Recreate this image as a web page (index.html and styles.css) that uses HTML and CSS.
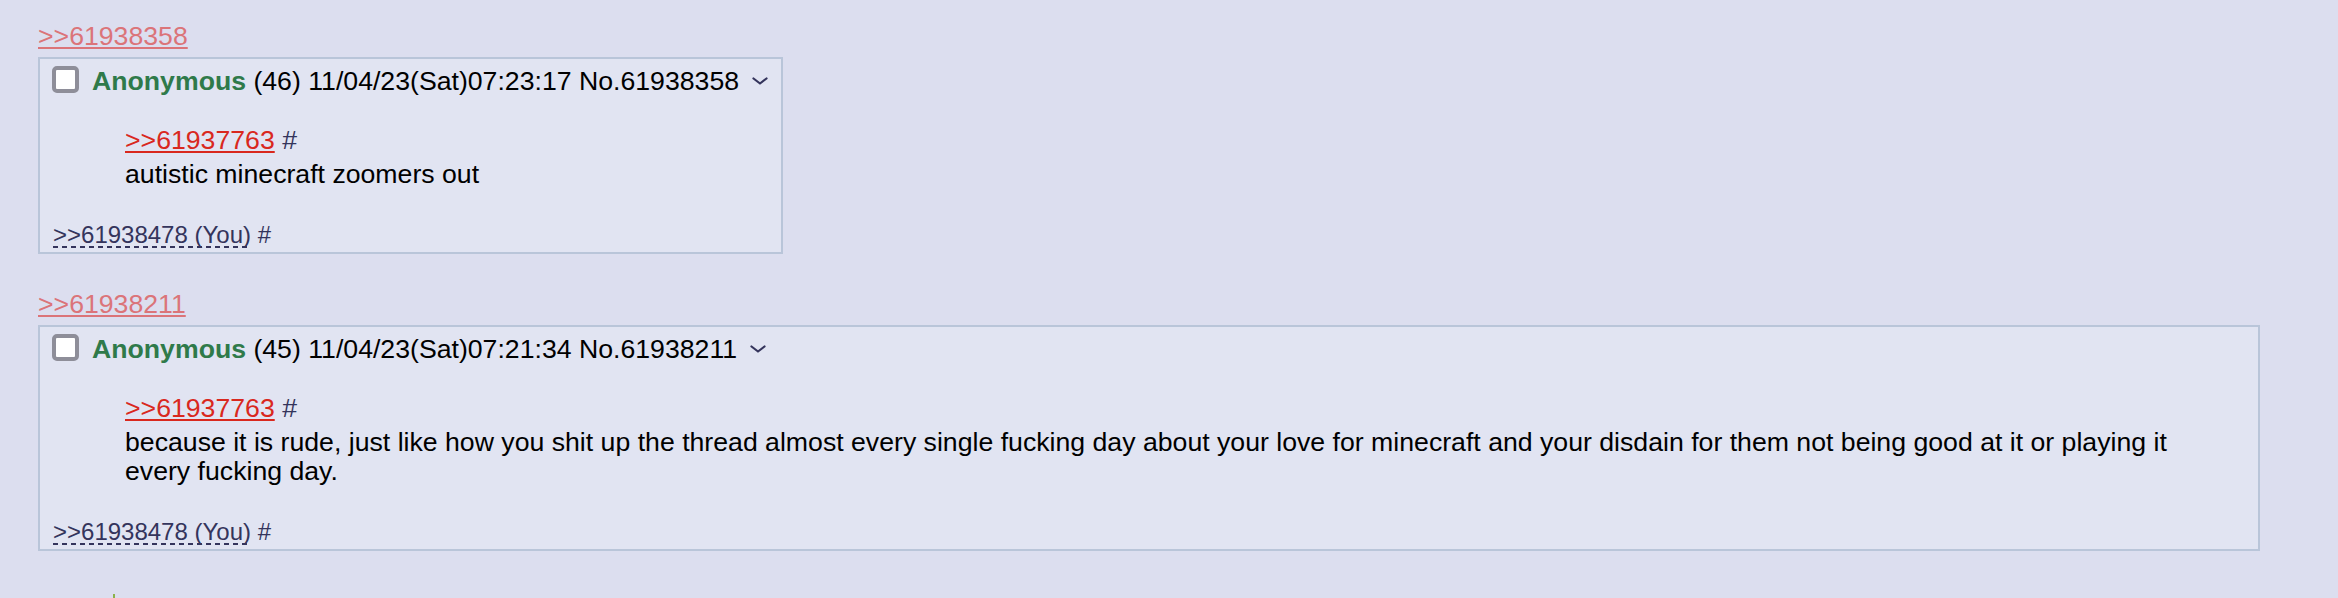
FILE: index.html
```html
<!DOCTYPE html>
<html>
<head>
<meta charset="utf-8">
<title>Thread</title>
<link rel="stylesheet" href="styles.css">
</head>
<body>
<div class="thread">
  <div class="group">
    <a class="ref" href="#p61938358">&gt;&gt;61938358</a>
    <div class="post">
      <div class="post-info">
        <input type="checkbox" class="check">
        <span class="meta"><span class="name">Anonymous</span> (46) 11/04/23(Sat)07:23:17 No.61938358</span>
        <svg class="menu" width="16" height="8" viewBox="0 0 16 8"><polyline points="1.5,1.5 8,6.5 14.5,1.5"/></svg>
      </div>
      <blockquote class="body">
        <span class="qline"><a class="quotelink" href="#p61937763">&gt;&gt;61937763</a> <a class="hash" href="#p61937763">#</a></span>
        autistic minecraft zoomers out
      </blockquote>
      <div class="backlinks"><a class="backlink" href="#p61938478">&gt;&gt;61938478 (You)</a> <a class="hash" href="#p61938478">#</a></div>
    </div>
  </div>
  <div class="group">
    <a class="ref" href="#p61938211">&gt;&gt;61938211</a>
    <div class="post">
      <div class="post-info">
        <input type="checkbox" class="check">
        <span class="meta"><span class="name">Anonymous</span> (45) 11/04/23(Sat)07:21:34 No.61938211</span>
        <svg class="menu" width="16" height="8" viewBox="0 0 16 8"><polyline points="1.5,1.5 8,6.5 14.5,1.5"/></svg>
      </div>
      <blockquote class="body">
        <span class="qline"><a class="quotelink" href="#p61937763">&gt;&gt;61937763</a> <a class="hash" href="#p61937763">#</a></span>
        because it is rude, just like how you shit up the thread almost every single fucking day about your love for minecraft and your disdain for them not being good at it or playing it every fucking day.
      </blockquote>
      <div class="backlinks"><a class="backlink" href="#p61938478">&gt;&gt;61938478 (You)</a> <a class="hash" href="#p61938478">#</a></div>
    </div>
  </div>
  <div class="next"><span class="mark"></span></div>
</div>
</body>
</html>
```
FILE: styles.css
```css
html, body {
  margin: 0;
  background: #dcdeef;
}
body {
  font-family: "Liberation Sans", Arial, Helvetica, sans-serif;
  font-size: 26.67px;
  color: #000;
}
.thread {
  padding: 21px 0 0 38px;
}
.group {
  margin-bottom: 35px;
}
.ref {
  display: block;
  width: fit-content;
  height: 31px;
  line-height: 31px;
  margin-bottom: 5px;
  color: #db7479;
  text-decoration: underline;
}
.post {
  box-sizing: border-box;
  width: fit-content;
  max-width: 2222px;
  border: 2px solid #b9c5d9;
  background: #e1e4f2;
  padding: 7px 4px 3px 4px;
}
.post-info {
  display: flex;
  align-items: flex-start;
  height: 31px;
  line-height: 31px;
  white-space: nowrap;
}
.check {
  appearance: none;
  -webkit-appearance: none;
  box-sizing: border-box;
  width: 27px;
  height: 27px;
  margin: 0 13px 0 8px;
  border: 4px solid #8e8e99;
  border-radius: 5px;
  background: #fff;
  flex: none;
}
.name {
  font-weight: bold;
  color: #2f7a4a;
}
.menu {
  flex: none;
  margin: 11px 9px 0 13px;
}
.menu polyline {
  fill: none;
  stroke: #34345c;
  stroke-width: 2.2;
  stroke-linecap: round;
  stroke-linejoin: round;
}
.body {
  margin: 29px 80px 32px 81px;
  line-height: 29px;
}
.qline {
  display: block;
  margin-bottom: 5px;
}
.quotelink {
  color: #d9281e;
  text-decoration: underline;
}
.hash {
  color: #34345c;
  text-decoration: none;
}
.backlinks {
  font-size: 24px;
  line-height: 28px;
  padding-left: 9px;
  color: #34345c;
}
.backlink {
  color: #34345c;
  text-decoration: none;
  background: repeating-linear-gradient(90deg, #34345c 0 5px, transparent 5px 9px) left bottom / 100% 2px no-repeat;
}
.next {
  padding: 8px 0 0 75px;
}
.mark {
  display: block;
  width: 2px;
  height: 8px;
  background: #8db14a;
}
```
